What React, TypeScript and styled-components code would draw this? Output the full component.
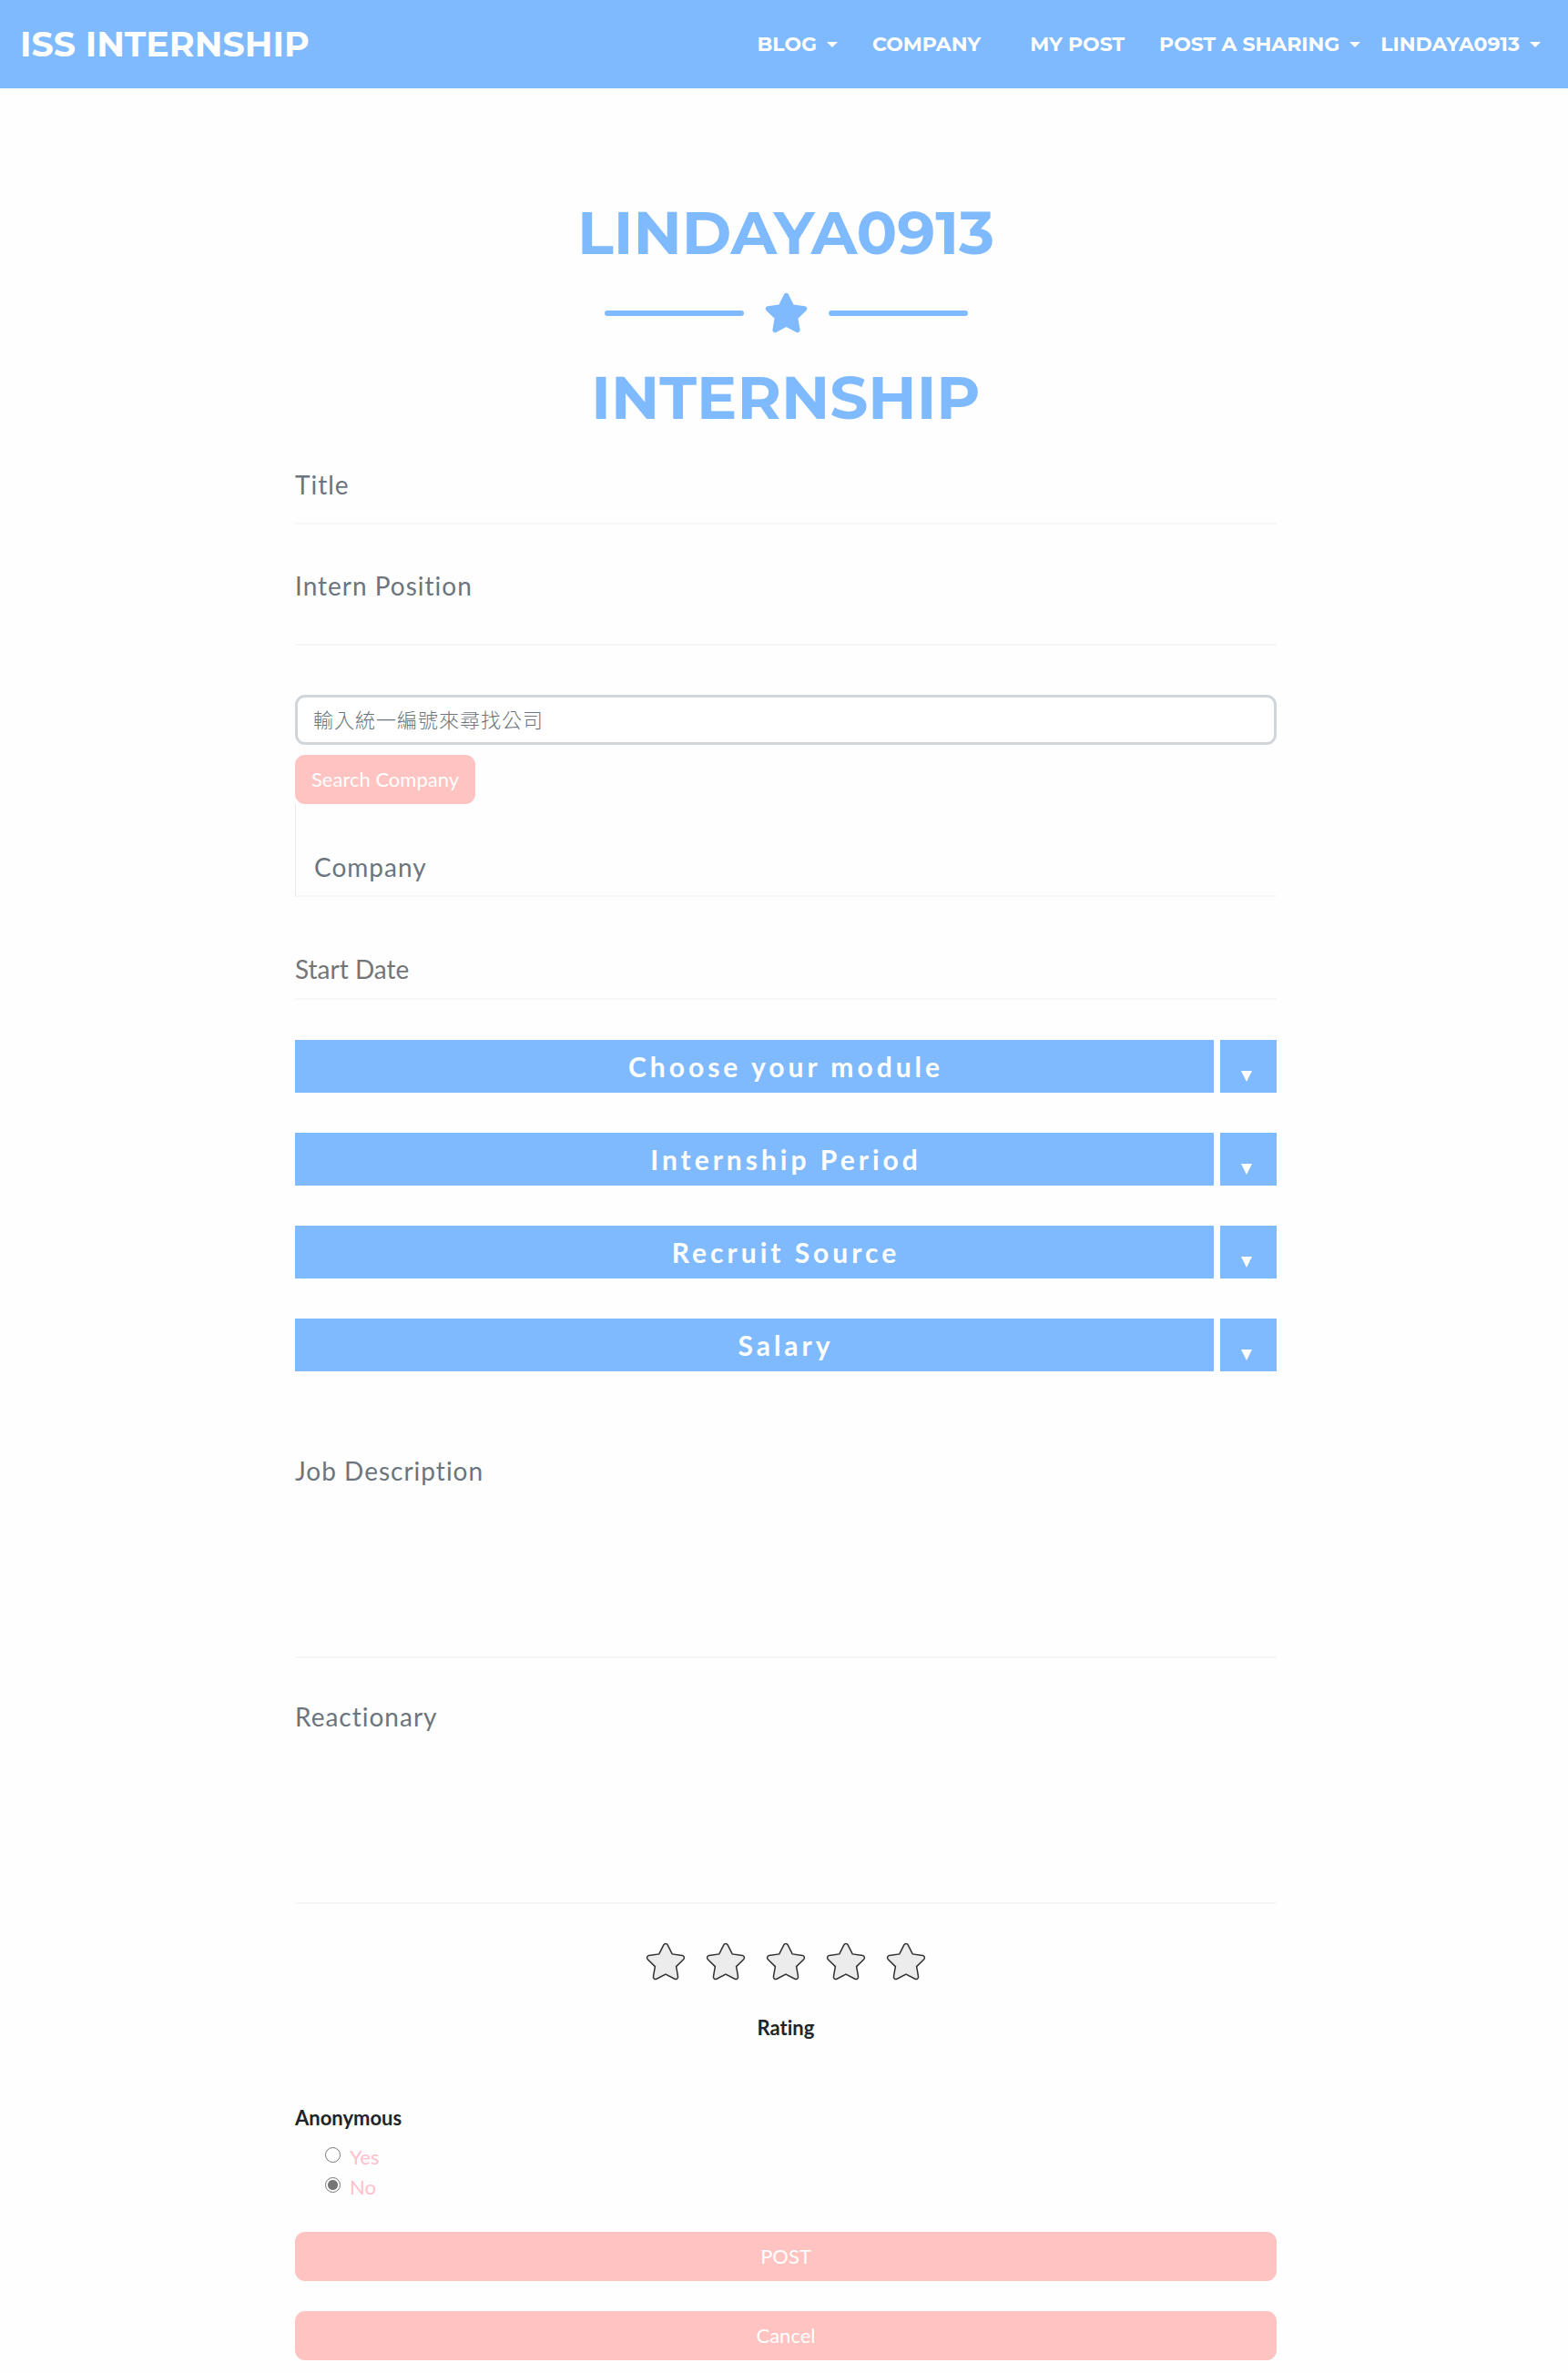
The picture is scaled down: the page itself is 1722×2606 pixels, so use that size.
import React, { useState } from "react";
import styled, { createGlobalStyle } from "styled-components";
import { FaStar } from "react-icons/fa";

const blue = "#7fbaff";
const pink = "#ffc4c1";
const muted = "#6c757d";
const line = "#f6f7f8";
const heading = `Montserrat, Inter, "Liberation Sans", sans-serif`;
const body = `Lato, "Noto Sans CJK TC", sans-serif`;

const GlobalStyle = createGlobalStyle`
  *, *::before, *::after { box-sizing: border-box; }
  body {
    margin: 0;
    background: #fefefe;
    color: #212529;
    font: 22px/33px ${body};
    font-variant-ligatures: none;
  }
  input, select, textarea, button { font: inherit; }
`;

const Navbar = styled.nav`
  display: flex;
  align-items: center;
  justify-content: space-between;
  height: 97px;
  padding: 0 30px 0 22px;
  background: ${blue};
  font-family: ${heading};
  font-weight: 700;
`;

const Brand = styled.a`
  color: #fff;
  font-size: 38px;
  line-height: 48px;
  text-decoration: none;
`;

const NavList = styled.ul`
  display: flex;
  align-items: center;
  margin: 0;
  padding: 0;
  list-style: none;
`;

const NavItem = styled.li<{ $before: number }>`
  margin-left: ${(p) => p.$before}px;
`;

const NavLink = styled.a`
  display: flex;
  align-items: center;
  gap: 11px;
  color: #fff;
  font-size: 22px;
  line-height: 32px;
  text-decoration: none;
`;

const Caret = styled.span`
  border: 6px solid transparent;
  border-top-color: #fff;
  border-bottom: 0;
`;

const Page = styled.main`
  display: flex;
  flex-direction: column;
  max-width: 1082px;
  margin: 0 auto;
  padding: 119px 0 14px 4px;
`;

const Heading = styled.h1`
  margin: 0;
  color: ${blue};
  font: 700 66px/80px ${heading};
  text-align: center;
`;

const Divider = styled.div`
  display: flex;
  align-items: center;
  justify-content: center;
  gap: 22px;
  height: 95px;
  margin-bottom: 6px;
  color: ${blue};
  font-size: 49px;

  &::before,
  &::after {
    content: "";
    width: 153px;
    height: 6px;
    border-radius: 3px;
    background: currentColor;
  }
`;

const Form = styled.form`
  display: flex;
  flex-direction: column;
  margin-top: 40px;
`;

const Field = styled.div<{ $gap: number }>`
  display: flex;
  flex-direction: column;
  margin-top: ${(p) => p.$gap}px;
`;

const Label = styled.label<{ $plain?: boolean }>`
  color: ${(p) => (p.$plain ? "#757575" : muted)};
  font-size: 28px;
  line-height: 30px;
  letter-spacing: ${(p) => (p.$plain ? "normal" : "1px")};
`;

const TextInput = styled.input<{ $height: number }>`
  width: 100%;
  height: ${(p) => p.$height}px;
  padding: 0;
  border: 0;
  border-bottom: 2px solid ${line};
  background: transparent;
  outline: none;
`;

const TextArea = styled.textarea`
  display: block;
  width: 100%;
  height: 191px;
  padding: 0;
  border: 0;
  border-bottom: 2px solid ${line};
  background: transparent;
  outline: none;
  resize: none;
`;

const SearchInput = styled.input`
  width: 100%;
  height: 55px;
  margin-top: 54px;
  padding: 0 17px;
  border: 3px solid #d0d5da;
  border-radius: 11px;
  background: #fff;
  letter-spacing: 1px;
  outline: none;

  &::placeholder {
    color: ${muted};
    font-weight: 300;
    opacity: 1;
  }
`;

const Button = styled.button<{ $gap: number; $inline?: boolean }>`
  align-self: ${(p) => (p.$inline ? "flex-start" : "stretch")};
  height: 54px;
  margin-top: ${(p) => p.$gap}px;
  padding: 0 18px 2px;
  border: 0;
  border-radius: 11px;
  background: ${pink};
  color: #fff;
`;

const CompanyField = styled.div`
  display: flex;
  flex-direction: column;
  padding-top: 54px;
  border-left: 1px solid #e9ecef;
  ${Label} {
    padding-left: 20px;
  }
`;

const SelectStack = styled.div`
  display: flex;
  flex-direction: column;
  gap: 44px;
  margin-top: 44px;
`;

const SelectBox = styled.div`
  position: relative;
`;

const Select = styled.select`
  display: block;
  width: 100%;
  height: 58px;
  padding: 0;
  border: 0;
  border-radius: 0;
  appearance: none;
  background: linear-gradient(
    to right,
    ${blue} calc(100% - 69px),
    transparent calc(100% - 69px),
    transparent calc(100% - 62px),
    ${blue} calc(100% - 62px)
  );
  color: #fff;
  font-size: 30px;
  font-weight: 700;
  letter-spacing: 4px;
  text-align: center;
  text-align-last: center;
`;

const SelectArrow = styled.span`
  position: absolute;
  right: 27px;
  bottom: 12px;
  border: 6px solid transparent;
  border-top: 12px solid #fff;
  border-bottom: 0;
  pointer-events: none;
`;

const Stars = styled.div`
  display: flex;
  justify-content: center;
  gap: 22px;
  margin-top: 41px;
`;

const StarButton = styled.button<{ $on: boolean }>`
  display: flex;
  width: 44px;
  height: 44px;
  padding: 0;
  border: 0;
  background: none;
  color: ${(p) => (p.$on ? "#ffd24d" : "#ececec")};
  font-size: 44px;

  svg {
    overflow: visible;
    stroke: #333;
    stroke-width: 20px;
  }
`;

const RatingTitle = styled.h2`
  margin: 34px 0 0;
  font-size: 22px;
  line-height: 33px;
  text-align: center;
`;

const Choices = styled.fieldset`
  display: flex;
  flex-direction: column;
  margin: 66px 0 0;
  padding: 0;
  border: 0;
`;

const Legend = styled.legend`
  padding: 0;
  margin-bottom: 10px;
  font-weight: 700;
`;

const Choice = styled.label`
  display: flex;
  align-items: center;
  gap: 10px;
  padding-left: 33px;
  color: #ffc0cb;
`;

const Radio = styled.input`
  width: 17px;
  height: 17px;
  margin: 0 0 4px;
  border: 1px solid #767676;
  border-radius: 50%;
  appearance: none;
  background: #fff;

  &:checked {
    background: radial-gradient(circle, #767676 5px, #fff 6px);
  }
`;

const navItems = [
  { text: "BLOG", before: 0, caret: true },
  { text: "COMPANY", before: 38, caret: false },
  { text: "MY POST", before: 54, caret: false },
  { text: "POST A SHARING", before: 38, caret: true },
  { text: "LINDAYA0913", before: 22, caret: true },
];

const selects = ["Choose your module", "Internship Period", "Recruit Source", "Salary"];

export default function App() {
  const [rating, setRating] = useState(0);
  return (
    <>
      <GlobalStyle />
      <Navbar>
        <Brand href="#home">ISS INTERNSHIP</Brand>
        <NavList>
          {navItems.map((item) => (
            <NavItem key={item.text} $before={item.before}>
              <NavLink href="#nav">
                {item.text}
                {item.caret && <Caret />}
              </NavLink>
            </NavItem>
          ))}
        </NavList>
      </Navbar>
      <Page>
        <Heading>LINDAYA0913</Heading>
        <Divider>
          <FaStar />
        </Divider>
        <Heading as="h2">INTERNSHIP</Heading>
        <Form onSubmit={(e) => e.preventDefault()}>
          <Field $gap={0}>
            <Label htmlFor="title">Title</Label>
            <TextInput id="title" $height={29} />
          </Field>
          <Field $gap={52}>
            <Label htmlFor="position">Intern Position</Label>
            <TextInput id="position" $height={51} />
          </Field>
          <SearchInput aria-label="輸入統一編號來尋找公司" placeholder="輸入統一編號來尋找公司" />
          <Button type="button" $gap={11} $inline>
            Search Company
          </Button>
          <CompanyField>
            <Label htmlFor="company">Company</Label>
            <TextInput id="company" $height={18} />
          </CompanyField>
          <Field $gap={64}>
            <Label htmlFor="start" $plain>
              Start Date
            </Label>
            <TextInput id="start" $height={19} />
          </Field>
          <SelectStack>
            {selects.map((name) => (
              <SelectBox key={name}>
                <Select aria-label={name}>
                  <option>{name}</option>
                </Select>
                <SelectArrow />
              </SelectBox>
            ))}
          </SelectStack>
          <Field $gap={94}>
            <Label htmlFor="description">Job Description</Label>
            <TextArea id="description" />
          </Field>
          <Field $gap={49}>
            <Label htmlFor="reactionary">Reactionary</Label>
            <TextArea id="reactionary" />
          </Field>
          <Stars>
            {[1, 2, 3, 4, 5].map((n) => (
              <StarButton
                key={n}
                type="button"
                aria-label={`${n} stars`}
                $on={n <= rating}
                onClick={() => setRating(n)}
              >
                <FaStar />
              </StarButton>
            ))}
          </Stars>
          <RatingTitle>Rating</RatingTitle>
          <Choices>
            <Legend>Anonymous</Legend>
            <Choice>
              <Radio type="radio" name="anonymous" />
              Yes
            </Choice>
            <Choice>
              <Radio type="radio" name="anonymous" defaultChecked />
              No
            </Choice>
          </Choices>
          <Button type="submit" $gap={33}>
            POST
          </Button>
          <Button type="button" $gap={33}>
            Cancel
          </Button>
        </Form>
      </Page>
    </>
  );
}
